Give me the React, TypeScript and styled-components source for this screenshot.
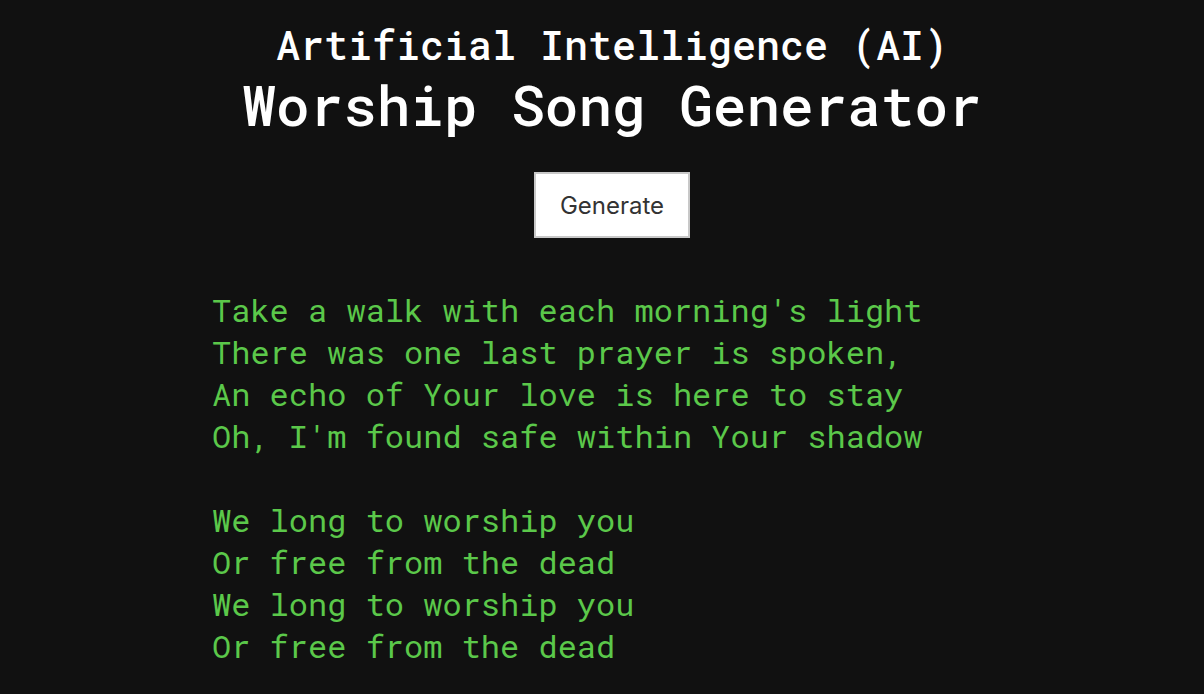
import React from "react";
import styled, { createGlobalStyle } from "styled-components";

const GlobalStyle = createGlobalStyle`
  html, body {
    margin: 0;
    padding: 0;
    background: #111111;
  }
`;

const Page = styled.main`
  min-height: 694px;
  background: #111111;
  font-family: "Roboto Mono", "DejaVu Sans Mono", monospace;
`;

const Header = styled.header`
  display: flex;
  flex-direction: column;
  align-items: center;
  padding: 20px 0 0 20px;
  color: #ffffff;
`;

const Kicker = styled.h2`
  margin: 0;
  font-size: 40px;
  line-height: 50px;
  font-weight: 500;
`;

const Title = styled.h1`
  margin: 2px 0 0;
  font-size: 56px;
  line-height: 64px;
  font-weight: 500;
`;

const GenerateButton = styled.button`
  margin-top: 36px;
  width: 156px;
  height: 66px;
  background: #ffffff;
  border: 2px solid #c8c8c8;
  color: #333333;
  font-family: Inter, "Noto Sans", sans-serif;
  font-size: 24px;
  cursor: pointer;
`;

const Lyrics = styled.section`
  width: 780px;
  margin: 51px auto 0;
  color: #5bc84a;
  font-size: 32px;
  line-height: 42px;
  white-space: pre;
`;

const Stanza = styled.div`
  & + & {
    margin-top: 42px;
  }
`;

const stanzas = [
  [
    "Take a walk with each morning's light",
    "There was one last prayer is spoken,",
    "An echo of Your love is here to stay",
    "Oh, I'm found safe within Your shadow",
  ],
  [
    "We long to worship you",
    "Or free from the dead",
    "We long to worship you",
    "Or free from the dead",
  ],
];

export default function App() {
  return (
    <>
      <GlobalStyle />
      <Page>
        <Header>
          <Kicker>Artificial Intelligence (AI)</Kicker>
          <Title>Worship Song Generator</Title>
          <GenerateButton>Generate</GenerateButton>
        </Header>
        <Lyrics>
          {stanzas.map((lines, i) => (
            <Stanza key={i}>
              {lines.map((l, j) => (
                <div key={j}>{l}</div>
              ))}
            </Stanza>
          ))}
        </Lyrics>
      </Page>
    </>
  );
}
